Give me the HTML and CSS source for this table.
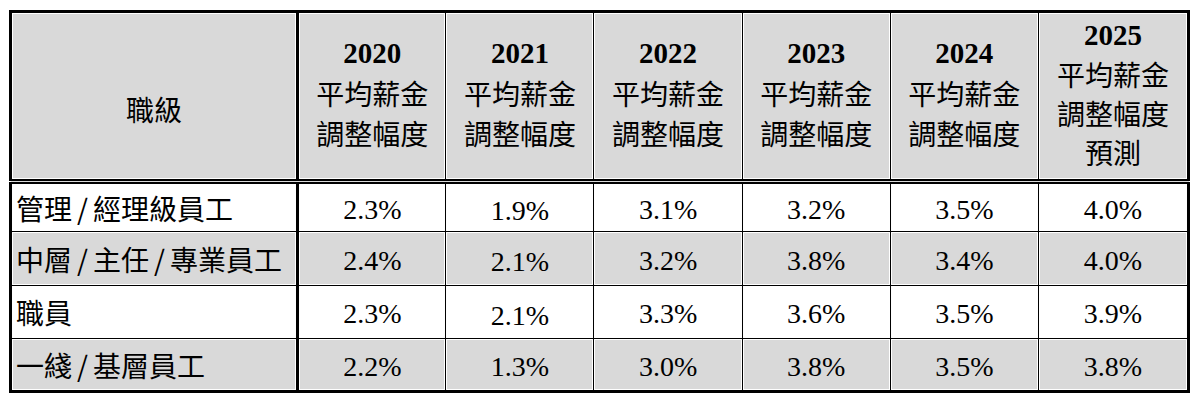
FILE: index.html
```html
<!DOCTYPE html>
<html lang="zh-Hant">
<head>
<meta charset="utf-8">
<link rel="stylesheet" href="styles.css">
</head>
<body>
<div class="wrap">
<table class="salary">
  <colgroup>
    <col class="c-label">
    <col class="c-year"><col class="c-year"><col class="c-year"><col class="c-year"><col class="c-year">
    <col class="c-last">
  </colgroup>
  <thead>
    <tr class="head">
      <th class="label-head">職級</th>
      <th><span class="yr">2020</span><br>平均薪金<br>調整幅度</th>
      <th><span class="yr">2021</span><br>平均薪金<br>調整幅度</th>
      <th><span class="yr">2022</span><br>平均薪金<br>調整幅度</th>
      <th><span class="yr">2023</span><br>平均薪金<br>調整幅度</th>
      <th><span class="yr">2024</span><br>平均薪金<br>調整幅度</th>
      <th class="last"><span class="yr">2025</span><br>平均薪金<br>調整幅度<br>預測</th>
    </tr>
  </thead>
  <tbody>
    <tr class="r1">
      <td class="label">管理<span class="sl">/</span>經理級員工</td>
      <td>2.3%</td><td class="low">1.9%</td><td>3.1%</td><td>3.2%</td><td>3.5%</td><td>4.0%</td>
    </tr>
    <tr class="r2 alt">
      <td class="label">中層<span class="sl">/</span>主任<span class="sl">/</span>專業員工</td>
      <td>2.4%</td><td class="low">2.1%</td><td>3.2%</td><td>3.8%</td><td>3.4%</td><td>4.0%</td>
    </tr>
    <tr class="r3">
      <td class="label">職員</td>
      <td>2.3%</td><td class="low">2.1%</td><td>3.3%</td><td>3.6%</td><td>3.5%</td><td>3.9%</td>
    </tr>
    <tr class="r4 alt">
      <td class="label">一綫<span class="sl">/</span>基層員工</td>
      <td>2.2%</td><td>1.3%</td><td>3.0%</td><td>3.8%</td><td>3.5%</td><td>3.8%</td>
    </tr>
  </tbody>
</table>
</div>
</body>
</html>
```
FILE: styles.css
```css
html, body {
  margin: 0;
  padding: 0;
  background: #ffffff;
}
.wrap {
  padding: 10px 9px;
}
.salary {
  border-collapse: collapse;
  table-layout: fixed;
  width: 1181px;
  border: 3px solid #000;
  color: #000;
}
.c-label { width: 287px; }
.c-year { width: 148px; }
.c-last { width: 150px; }

.salary th,
.salary td {
  border: 1px solid #000;
  padding: 0;
  box-shadow: inset 0 0 0 1px #fff;
}
.salary th:first-child,
.salary td:first-child {
  border-right: 3px solid #000;
}
.head th {
  background: #d9d9d9;
  height: 158px;
  padding-bottom: 8px;
  border-bottom: 5px double #000;
  font-family: "Noto Sans CJK TC", "Noto Sans CJK SC", sans-serif;
  font-weight: 400;
  font-size: 28px;
  line-height: 40px;
  text-align: center;
  vertical-align: middle;
}
.head th.last {
  line-height: 39px;
  padding-bottom: 6px;
  height: 160px;
}
.head th.label-head {
  height: 140px;
  padding-top: 26px;
  padding-bottom: 0;
}
.yr {
  font-family: "Liberation Serif", "Noto Sans CJK TC", serif;
  font-weight: 700;
  font-size: 29px;
}
.salary td {
  font-family: "Liberation Serif", serif;
  font-size: 28px;
  line-height: 30px;
  text-align: center;
  vertical-align: middle;
  padding-top: 4px;
}
.salary td.low {
  padding-top: 7px;
}
.salary td.label {
  font-family: "Noto Sans CJK TC", "Noto Sans CJK SC", sans-serif;
  font-size: 28px;
  line-height: 30px;
  text-align: left;
  padding: 0 0 0 4px;
  white-space: nowrap;
}
.sl {
  font-family: "Noto Sans CJK TC", sans-serif;
  padding: 0 5px;
}
.alt td {
  background: #d9d9d9;
}
.r1 td { height: 40px; }
.r2 td { height: 46px; }
.r3 td { height: 45px; }
.r4 td { height: 47px; }
.r1 td.label { height: 44px; }
.r2 td.label { height: 50px; }
.r3 td.label { height: 49px; }
.r4 td.label { height: 51px; }
```
